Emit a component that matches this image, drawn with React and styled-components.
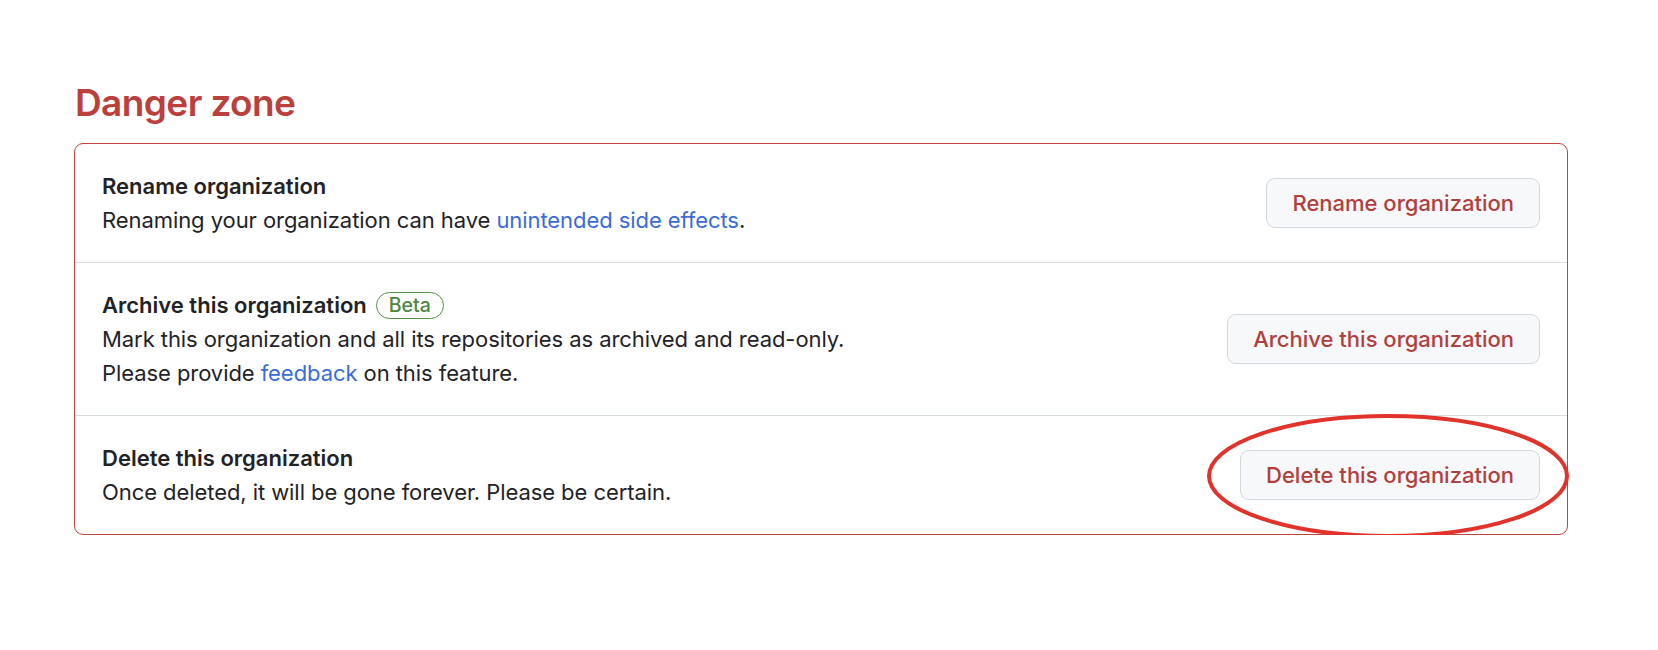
import React from 'react';
import styled, { createGlobalStyle } from 'styled-components';

const GlobalStyle = createGlobalStyle`
  body {
    margin: 0;
    background: #ffffff;
    font-family: Inter, "Noto Sans", "Liberation Sans", sans-serif;
    color: #1f2328;
  }
`;

const Page = styled.div`
  padding: 79px 90px 0 74px;
`;

const Heading = styled.h2`
  margin: 0 0 16px 1px;
  font-size: 37px;
  line-height: 48px;
  font-weight: 600;
  letter-spacing: -0.6px;
  color: #bb403b;
`;

const Box = styled.div`
  border: 1px solid #c4443f;
  border-radius: 9px;
  background: #ffffff;
`;

const Row = styled.div`
  display: flex;
  align-items: center;
  justify-content: space-between;
  padding: 25px 27px 25px 27px;
  border-top: ${props => (props.first ? 'none' : '1px solid #d8dee4')};
`;

const Info = styled.div`
  font-size: 22px;
  line-height: 34px;
`;

const Title = styled.div`
  display: flex;
  align-items: center;
  font-weight: 600;
  color: #1f2328;
`;

const Text = styled.div`
  color: #1f2328;
  letter-spacing: -0.07px;
`;

const Link = styled.a`
  color: #3a6cd9;
  text-decoration: none;
`;

const Badge = styled.span`
  display: inline-flex;
  align-items: center;
  height: 25px;
  margin-left: 9px;
  padding: 0 12px;
  border: 1.5px solid #56904c;
  border-radius: 999px;
  font-size: 19.5px;
  font-weight: 500;
  color: #4b8741;
`;

const Button = styled.button`
  height: 50px;
  padding: 0 25px;
  background: #f6f8fa;
  border: 1px solid #d3d8de;
  border-radius: 9px;
  font-family: inherit;
  font-size: 22px;
  font-weight: 500;
  color: #b43e3a;
  cursor: pointer;
`;

const Marked = styled.span`
  position: relative;
  display: inline-flex;
`;

const Circle = styled.svg`
  position: absolute;
  right: -29px;
  top: -36px;
  pointer-events: none;
  overflow: visible;
`;

function App() {
  return (
    <Page>
      <GlobalStyle />
      <Heading>Danger zone</Heading>
      <Box>
        <Row first>
          <Info>
            <Title>Rename organization</Title>
            <Text>
              Renaming your organization can have <Link href="#">unintended side effects</Link>.
            </Text>
          </Info>
          <Button>Rename organization</Button>
        </Row>
        <Row>
          <Info>
            <Title>
              Archive this organization <Badge>Beta</Badge>
            </Title>
            <Text>Mark this organization and all its repositories as archived and read-only.</Text>
            <Text>
              Please provide <Link href="#">feedback</Link> on this feature.
            </Text>
          </Info>
          <Button>Archive this organization</Button>
        </Row>
        <Row>
          <Info>
            <Title>Delete this organization</Title>
            <Text>Once deleted, it will be gone forever. Please be certain.</Text>
          </Info>
          <Marked>
            <Button>Delete this organization</Button>
            <Circle width="362" height="124" viewBox="0 0 362 124">
              <ellipse cx="181" cy="62" rx="179" ry="60" fill="none" stroke="#e1322b" strokeWidth="4" />
            </Circle>
          </Marked>
        </Row>
      </Box>
    </Page>
  );
}

export default App;
